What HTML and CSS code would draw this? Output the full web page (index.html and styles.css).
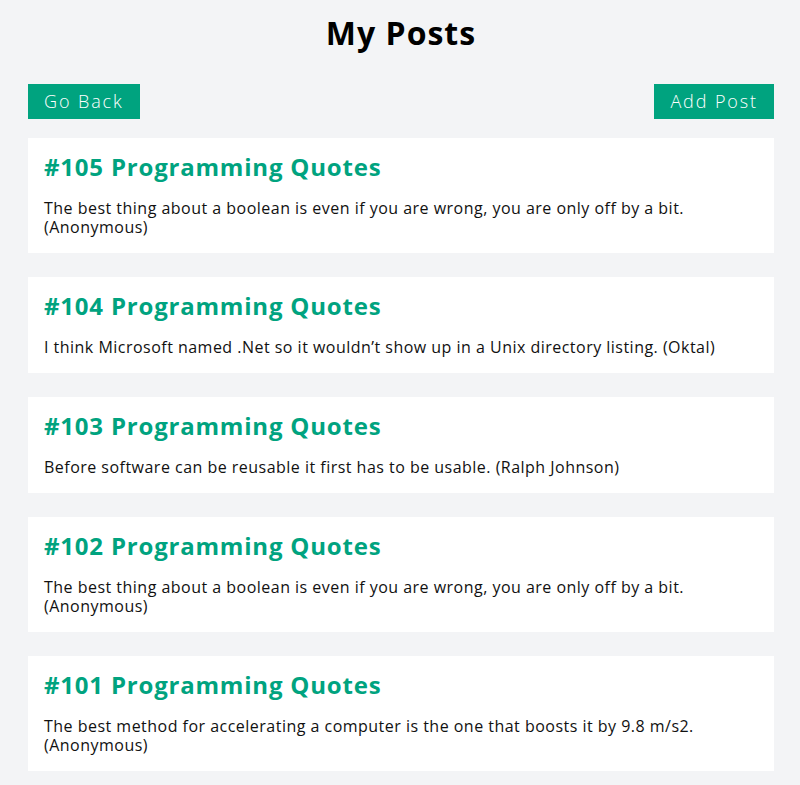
FILE: index.html
```html
<!DOCTYPE html>
<html lang="en">
<head>
<meta charset="utf-8">
<title>My Posts</title>
<link rel="stylesheet" href="styles.css">
</head>
<body>
<main class="page">
  <h1 class="page-title">My Posts</h1>
  <div class="toolbar">
    <button class="btn">Go Back</button>
    <button class="btn">Add Post</button>
  </div>
  <ul class="posts">
    <li class="post">
      <h2 class="post-title">#105 Programming Quotes</h2>
      <p class="post-body">The best thing about a boolean is even if you are wrong, you are only off by a bit. (Anonymous)</p>
    </li>
    <li class="post">
      <h2 class="post-title">#104 Programming Quotes</h2>
      <p class="post-body">I think Microsoft named .Net so it wouldn’t show up in a Unix directory listing. (Oktal)</p>
    </li>
    <li class="post">
      <h2 class="post-title">#103 Programming Quotes</h2>
      <p class="post-body">Before software can be reusable it first has to be usable. (Ralph Johnson)</p>
    </li>
    <li class="post">
      <h2 class="post-title">#102 Programming Quotes</h2>
      <p class="post-body">The best thing about a boolean is even if you are wrong, you are only off by a bit. (Anonymous)</p>
    </li>
    <li class="post">
      <h2 class="post-title">#101 Programming Quotes</h2>
      <p class="post-body">The best method for accelerating a computer is the one that boosts it by 9.8 m/s2. (Anonymous)</p>
    </li>
  </ul>
</main>
</body>
</html>
```

FILE: styles.css
```css
* { box-sizing: border-box; }
html, body {
  margin: 0;
  padding: 0;
  background: #f3f4f6;
}
body {
  font-family: "Open Sans", "Liberation Sans", sans-serif;
  color: #111;
}
.page {
  padding: 9px 26px 0 28px;
}
.page-title {
  margin: 0;
  text-align: center;
  font-size: 32px;
  line-height: 48px;
  font-weight: 700;
  letter-spacing: 1px;
  color: #000;
}
.toolbar {
  display: flex;
  justify-content: space-between;
  margin-top: 27px;
}
.btn {
  font-family: inherit;
  font-size: 18px;
  font-weight: 300;
  letter-spacing: 1.9px;
  line-height: 27px;
  padding: 4px 16px;
  height: 35px;
  border: 0;
  border-radius: 0;
  background: #00a37f;
  color: #fff;
  cursor: pointer;
}
.posts {
  list-style: none;
  margin: 19px 0 0;
  padding: 0;
}
.post {
  background: #fff;
  padding: 16px;
  margin-bottom: 24px;
}
.post-title {
  margin: 0 0 20px;
  font-size: 24px;
  line-height: 25px;
  font-weight: 700;
  letter-spacing: 0.8px;
  color: #00a37f;
}
.post-body {
  margin: 0;
  font-size: 16px;
  line-height: 19px;
  letter-spacing: 0.48px;
}
```
